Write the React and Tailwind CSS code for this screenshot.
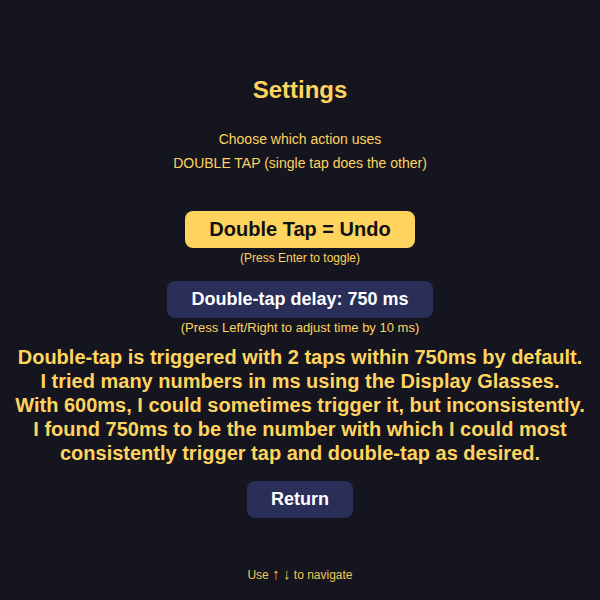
import React from "react";

const font = { fontFamily: '"Liberation Sans", Arial, sans-serif' };

export default function App() {
  return (
    <div
      className="w-full h-[600px] bg-[#14151f] text-[#ffd45e] flex flex-col items-center text-center"
      style={font}
    >
      {/* Title */}
      <h1 className="mt-[74px] text-2xl leading-8 font-bold">Settings</h1>

      {/* Subtitle */}
      <div className="mt-[21px] text-sm leading-6">
        <p>Choose which action uses</p>
        <p>DOUBLE TAP (single tap does the other)</p>
      </div>

      {/* Toggle */}
      <button className="mt-9 px-6 py-1.5 rounded-lg bg-[#ffd45e] text-[#111] text-xl leading-[25px] font-bold">
        Double Tap = Undo
      </button>
      <p className="mt-0.5 text-xs leading-4">(Press Enter to toggle)</p>

      {/* Delay */}
      <button className="mt-[15px] px-6 py-1.5 rounded-lg bg-[#2a2f5a] text-white text-lg leading-[25px] font-bold">
        Double-tap delay: 750 ms
      </button>
      <p className="mt-0.5 text-[13px] leading-4">
        (Press Left/Right to adjust time by 10 ms)
      </p>

      {/* Explanation */}
      <p className="mt-[9px] text-xl leading-6 font-bold">
        Double-tap is triggered with 2 taps within 750ms by default.
        <br />
        I tried many numbers in ms using the Display Glasses.
        <br />
        With 600ms, I could sometimes trigger it, but inconsistently.
        <br />
        I found 750ms to be the number with which I could most
        <br />
        consistently trigger tap and double-tap as desired.
      </p>

      <button className="mt-4 px-6 py-1.5 rounded-lg bg-[#2a2f5a] text-white text-lg leading-[25px] font-bold">
        Return
      </button>

      {/* Footer */}
      <p className="mt-auto mb-[18px] h-4 text-xs leading-4 text-[#f0c955]">
        Use <span className="text-[15px] leading-none">↑</span>{" "}
        <span className="text-[15px] leading-none">↓</span> to navigate
      </p>
    </div>
  );
}
